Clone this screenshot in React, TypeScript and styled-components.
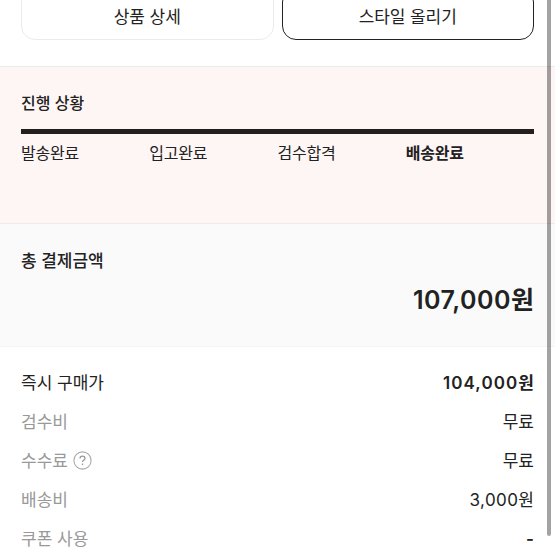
import React from "react";
import styled, { createGlobalStyle } from "styled-components";

const Global = createGlobalStyle`
  *{box-sizing:border-box}
  body{margin:0;overflow:hidden;background:#fff}
`;
const Page = styled.main`
  position:relative;width:555px;height:555px;overflow:hidden;background:#fff;color:#222;
  font-family:Inter,"Noto Sans CJK KR",sans-serif;font-size:16px;
`;
const Actions = styled.div`
  display:grid;grid-template-columns:1fr 1fr;gap:8px;height:67px;padding:0 21px;
  border-bottom:1px solid #ebebeb;
`;
const Action = styled.button<{ $strong?: boolean }>`
  height:52px;margin-top:-12px;padding:2px 0 0;border-radius:14px;background:#fff;
  border:1px solid ${p => (p.$strong ? "#222" : "#ebebeb")};
  font:inherit;font-size:17px;letter-spacing:-.1px;color:#222;
`;
const Progress = styled.section`
  height:157px;padding:24px 21px 0;background:#fef6f4;border-bottom:1px solid #f0eae8;
`;
const Title = styled.h2<{ $large?: boolean }>`
  margin:0;font-size:${p => (p.$large ? 17 : 16)}px;line-height:24px;font-weight:500;
`;
const Bar = styled.div`
  height:5px;margin-top:14px;background:#231f1e;
`;
const Steps = styled.div`
  display:grid;grid-template-columns:repeat(4,1fr);margin-top:7px;line-height:24px;letter-spacing:-.2px;
`;
const Step = styled.span<{ $current?: boolean }>`
  font-weight:${p => (p.$current ? 700 : 400)};
`;
const Total = styled.section`
  height:123px;padding:25px 21px 0;background:#fafafa;border-bottom:1px solid #f4f4f4;
`;
const Amount = styled.div`
  margin-top:9px;text-align:right;font-size:25px;line-height:36px;font-weight:600;
`;
const Number = styled.span<{ $spacing: number }>`
  letter-spacing:${p => p.$spacing}px;
`;
const Details = styled.dl`
  margin:0;padding:17px 21px 0;font-size:17px;
`;
const Row = styled.div`
  display:flex;justify-content:space-between;height:39px;line-height:39px;
`;
const Label = styled.dt<{ $main?: boolean }>`
  display:flex;align-items:center;gap:5px;color:${p => (p.$main ? "#222" : "#999")};
`;
const Value = styled.dd<{ $main?: boolean }>`
  margin:0;font-weight:${p => (p.$main ? 600 : 400)};
`;
const HelpGlyph = styled.svg`
  width:19px;height:19px;margin-bottom:2px;
`;
const Scrollbar = styled.div`
  position:absolute;right:4px;top:0;width:4px;height:536px;background:rgba(0,0,0,.36);border-radius:0 0 2px 2px;
`;
const steps = ["발송완료", "입고완료", "검수합격", "배송완료"];
const rows = [
  { label: "즉시 구매가", number: "104,000", unit: "원" },
  { label: "검수비", number: "", unit: "무료" },
  { label: "수수료", number: "", unit: "무료" },
  { label: "배송비", number: "3,000", unit: "원" },
  { label: "쿠폰 사용", number: "", unit: "-" },
];

function HelpIcon() {
  return <HelpGlyph viewBox="0 0 19 19" fill="none" stroke="#aaa" strokeWidth="1.1">
    <circle cx="9.5" cy="9.5" r="8.6" /><path d="M7 7.4c.1-3 5-3 5 0 0 1.7-2.5 1.7-2.5 3.6M9.5 12.5v1.4" stroke="#999" strokeWidth="1.3" />
  </HelpGlyph>;
}
export default function App() {
  return <Page><Global />
    <Actions><Action>상품 상세</Action><Action $strong>스타일 올리기</Action></Actions>
    <Progress><Title>진행 상황</Title><Bar /><Steps>{steps.map((s, i) => <Step key={s} $current={i === 3}>{s}</Step>)}</Steps></Progress>
    <Total><Title $large>총 결제금액</Title><Amount><Number $spacing={0.5}>107,000</Number>원</Amount></Total>
    <Details>{rows.map(({ label, number, unit }, i) => <Row key={label}>
      <Label $main={i === 0}>{label}{i === 2 && <HelpIcon />}</Label>
      <Value $main={i === 0 || unit === "-"}><Number $spacing={i === 0 ? 1.1 : 0.4}>{number}</Number>{unit}</Value>
    </Row>)}</Details>
    <Scrollbar />
  </Page>;
}
